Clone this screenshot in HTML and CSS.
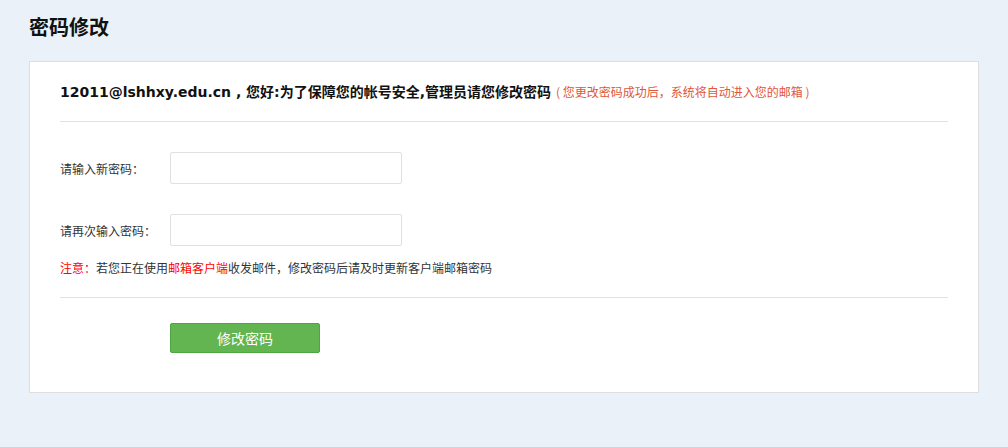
FILE: index.html
```html
<!DOCTYPE html>
<html lang="zh-CN">
<head>
  <meta charset="UTF-8">
  <title>密码修改</title>
  <link rel="stylesheet" href="styles.css">
</head>
<body>

<!-- 标题 -->
<h1 class="page-title">密码修改</h1>

<!-- 主体 -->
<div class="card">
  <div class="card-head">
    <span class="welcome">12011@lshhxy.edu.cn , 您好:为了保障您的帐号安全,管理员请您修改密码</span>
    <span class="hint">( 您更改密码成功后，系统将自动进入您的邮箱 )</span>
  </div>

  <div class="form">
    <div class="row">
      <label class="label">请输入新密码：</label>
      <input type="password" class="field">
    </div>
    <div class="row">
      <label class="label">请再次输入密码：</label>
      <input type="password" class="field">
    </div>
    <p class="note"><span class="red">注意：</span>若您正在使用<span class="red">邮箱客户端</span>收发邮件，修改密码后请及时更新客户端邮箱密码</p>
  </div>

  <div class="actions">
    <button class="btn">修改密码</button>
  </div>
</div>

</body>
</html>
```

FILE: styles.css
```css
* {
  box-sizing: border-box;
}
body {
  margin: 0;
  padding: 0 29px;
  font-family: "DejaVu Sans", "Noto Sans CJK SC", sans-serif;
  background: #eaf1f9;
  color: #333;
}
/* 标题 */
.page-title {
  margin: 0;
  padding-top: 12px;
  height: 61px;
  font-size: 20px;
  line-height: 30px;
  font-weight: bold;
  color: #111;
  font-family: "Noto Sans CJK SC", sans-serif;
}
/* 卡片 */
.card {
  background: #fff;
  border: 1px solid #dedede;
  padding: 0 30px 39px;
}
.card-head {
  padding: 19px 0 18px;
  line-height: 22px;
  border-bottom: 1px solid #e2e2e2;
  white-space: nowrap;
}
.welcome {
  font-size: 14px;
  font-weight: bold;
  color: #111;
}
.hint {
  font-size: 12px;
  color: #e0563a;
  font-family: "Noto Sans CJK SC", sans-serif;
}
/* 表单 */
.form {
  padding: 30px 0 19px;
  border-bottom: 1px solid #e2e2e2;
}
.row {
  display: flex;
  align-items: center;
  height: 32px;
  margin-bottom: 30px;
}
.row + .row {
  margin-bottom: 0;
}
.label {
  width: 110px;
  font-size: 12px;
  color: #333;
  font-family: "Noto Sans CJK SC", sans-serif;
}
.field {
  width: 232px;
  height: 32px;
  border: 1px solid #e0e0e0;
  border-radius: 2px;
  outline: none;
  padding: 0 8px;
}
.note {
  margin: 12px 0 0;
  font-size: 12px;
  line-height: 20px;
  color: #333;
  font-family: "Noto Sans CJK SC", sans-serif;
}
.red {
  color: #ff0000;
}
/* 按钮 */
.actions {
  padding: 25px 0 0 110px;
}
.btn {
  width: 150px;
  height: 30px;
  background: #62b551;
  border: 1px solid #4fa444;
  border-radius: 2px;
  color: #fff;
  font-size: 14px;
  font-family: "Noto Sans CJK SC", sans-serif;
  cursor: pointer;
}
```
